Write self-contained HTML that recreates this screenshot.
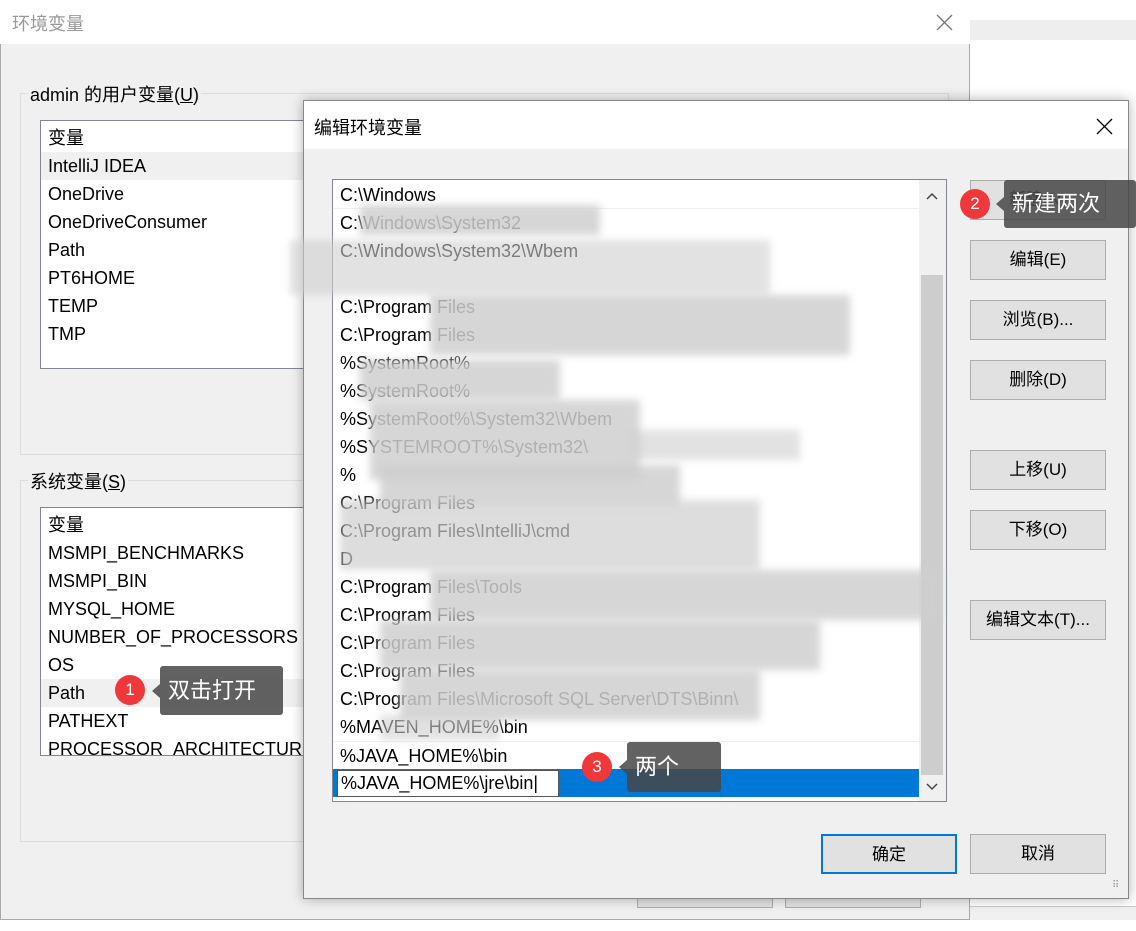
<!DOCTYPE html>
<html><head><meta charset="utf-8"><style>
*{margin:0;padding:0;box-sizing:border-box}
body{width:1136px;height:931px;overflow:hidden;background:#fff;font-family:"Liberation Sans","Noto Sans CJK SC",sans-serif;font-size:18px;color:#000;position:relative}
.a{position:absolute}
.row{position:absolute;left:0;right:0;height:28px;line-height:28px;padding-left:7px;white-space:nowrap}
.btn{position:absolute;left:970px;width:136px;height:40px;background:#e1e1e1;border:1px solid #adadad;text-align:center;line-height:38px;font-size:17px}
.badge{position:absolute;width:30px;height:30px;border-radius:50%;background:#f0383a;color:#fff;text-align:center;line-height:30px;font-size:17px}
.tip{position:absolute;background:rgba(70,70,70,.85);color:#fff;font-size:22px;border-radius:3px;padding-left:8px}
.tip:before{content:"";position:absolute;left:-8px;top:50%;margin-top:-7px;border:7px solid transparent;border-left:0;border-right:8px solid rgba(70,70,70,.85)}
.blur{position:absolute;background:#cfcfcf;filter:blur(4px);opacity:.85}
</style></head><body>
<div class="a" style="left:0;top:0;width:970px;height:920px;background:#f0f0f0;border:1px solid #aaa"></div>
<div class="a" style="left:0;top:0;width:970px;height:44px;background:#fff"></div>
<div class="a" style="left:12px;top:10px;color:#999;font-size:18px">环境变量</div>
<svg class="a" style="left:936px;top:14px" width="17" height="17"><path d="M1 1L16 16M16 1L1 16" stroke="#777" stroke-width="1.3"/></svg>
<div class="a" style="left:970px;top:20px;width:166px;height:20px;background:#eee"></div>
<div class="a" style="left:970px;top:906px;width:166px;height:14px;background:#f0f0f0;border-top:1px solid #ccc"></div>
<div class="a" style="left:20px;top:93px;width:929px;height:362px;border:1px solid #dcdcdc"></div>
<div class="a" style="left:28px;top:81px;background:#f0f0f0;padding:0 2px;font-size:18px">admin 的用户变量(<u>U</u>)</div>
<div class="a" style="left:40px;top:120px;width:280px;height:249px;background:#fff;border:1px solid #828790;overflow:hidden">
 <div class="row" style="top:3px">变量</div>
 <div class="row" style="top:31px;background:#f0f0f0">IntelliJ IDEA</div>
 <div class="row" style="top:59px">OneDrive</div>
 <div class="row" style="top:87px">OneDriveConsumer</div>
 <div class="row" style="top:115px">Path</div>
 <div class="row" style="top:143px">PT6HOME</div>
 <div class="row" style="top:171px">TEMP</div>
 <div class="row" style="top:199px">TMP</div>
</div>
<div class="a" style="left:20px;top:480px;width:929px;height:362px;border:1px solid #dcdcdc"></div>
<div class="a" style="left:28px;top:468px;background:#f0f0f0;padding:0 2px">系统变量(<u>S</u>)</div>
<div class="a" style="left:40px;top:507px;width:280px;height:249px;background:#fff;border:1px solid #828790;overflow:hidden">
 <div class="row" style="top:3px">变量</div>
 <div class="row" style="top:31px">MSMPI_BENCHMARKS</div>
 <div class="row" style="top:59px">MSMPI_BIN</div>
 <div class="row" style="top:87px">MYSQL_HOME</div>
 <div class="row" style="top:115px">NUMBER_OF_PROCESSORS</div>
 <div class="row" style="top:143px">OS</div>
 <div class="row" style="top:171px;background:#f0f0f0">Path</div>
 <div class="row" style="top:199px">PATHEXT</div>
 <div class="row" style="top:227px">PROCESSOR_ARCHITECTURE</div>
</div>
<div class="a" style="left:637px;top:880px;width:136px;height:28px;background:#e1e1e1;border:1px solid #adadad"></div>
<div class="a" style="left:785px;top:880px;width:136px;height:28px;background:#e1e1e1;border:1px solid #adadad"></div>

<div class="a" style="left:303px;top:100px;width:826px;height:799px;background:#f0f0f0;border:1px solid #888;box-shadow:0 0 12px rgba(0,0,0,.3)"></div>
<div class="a" style="left:304px;top:101px;width:824px;height:48px;background:#fff"></div>
<div class="a" style="left:314px;top:114px;font-size:18px">编辑环境变量</div>
<svg class="a" style="left:1096px;top:118px" width="17" height="17"><path d="M1 1L16 16M16 1L1 16" stroke="#000" stroke-width="1.3"/></svg>
<div class="a" style="left:332px;top:179px;width:615px;height:623px;background:#fff;border:1px solid #828790;overflow:hidden">
 <div class="row" style="top:1px;border-bottom:1px solid #eee;right:27px">C:\Windows</div>
 <div class="row" style="top:29px;right:27px">C:\Windows\System32</div>
 <div class="row" style="top:57px;right:27px">C:\Windows\System32\Wbem</div>
 <div class="row" style="top:113px;right:27px">C:\Program Files</div>
 <div class="row" style="top:141px;right:27px">C:\Program Files</div>
 <div class="row" style="top:169px;right:27px">%SystemRoot%</div>
 <div class="row" style="top:197px;right:27px">%SystemRoot%</div>
 <div class="row" style="top:225px;right:27px">%SystemRoot%\System32\Wbem</div>
 <div class="row" style="top:253px;right:27px">%SYSTEMROOT%\System32\</div>
 <div class="row" style="top:281px;right:27px">%</div>
 <div class="row" style="top:309px;right:27px">C:\Program Files</div>
 <div class="row" style="top:337px;right:27px">C:\Program Files\IntelliJ\cmd</div>
 <div class="row" style="top:365px;right:27px">D</div>
 <div class="row" style="top:393px;right:27px">C:\Program Files\Tools</div>
 <div class="row" style="top:421px;right:27px">C:\Program Files</div>
 <div class="row" style="top:449px;right:27px">C:\Program Files</div>
 <div class="row" style="top:477px;right:27px">C:\Program Files</div>
 <div class="row" style="top:505px;right:27px">C:\Program Files\Microsoft SQL Server\DTS\Binn\</div>
 <div class="row" style="top:533px;right:27px">%MAVEN_HOME%\bin</div>
 <div class="row" style="top:561px;right:27px;border-top:1px solid #eee">%JAVA_HOME%\bin</div>
 <div class="row" style="top:589px;right:27px;background:#0078d7"></div>
 <div class="a" style="left:4px;top:590px;width:222px;height:27px;background:#fff;border:1px solid #555;line-height:25px;padding-left:3px;white-space:nowrap">%JAVA_HOME%\jre\bin|</div>
 <div class="a" style="right:0;top:0;width:27px;height:621px;background:#f0f0f0"></div>
 <div class="a" style="right:3px;top:95px;width:22px;height:500px;background:#cdcdcd"></div>
 <svg class="a" style="right:8px;top:12px" width="12" height="8"><path d="M1 7L6 2L11 7" stroke="#444" stroke-width="1.5" fill="none"/></svg>
 <svg class="a" style="right:8px;top:603px" width="12" height="8"><path d="M1 1L6 6L11 1" stroke="#444" stroke-width="1.5" fill="none"/></svg>
</div>
<div class="blur" style="left:360px;top:205px;width:240px;height:30px"></div>
<div class="blur" style="left:290px;top:240px;width:480px;height:55px;opacity:.6"></div>
<div class="blur" style="left:430px;top:295px;width:420px;height:60px"></div>
<div class="blur" style="left:360px;top:360px;width:200px;height:40px"></div>
<div class="blur" style="left:370px;top:400px;width:270px;height:80px"></div>
<div class="blur" style="left:630px;top:430px;width:170px;height:30px;opacity:.6"></div>
<div class="blur" style="left:380px;top:465px;width:300px;height:40px"></div>
<div class="blur" style="left:340px;top:500px;width:420px;height:70px;opacity:.7"></div>
<div class="blur" style="left:430px;top:570px;width:510px;height:50px"></div>
<div class="blur" style="left:380px;top:620px;width:440px;height:50px"></div>
<div class="blur" style="left:400px;top:670px;width:360px;height:50px"></div>
<div class="blur" style="left:380px;top:715px;width:120px;height:25px;opacity:.6"></div>

<div class="btn" style="top:180px">新建(N)</div>
<div class="btn" style="top:240px">编辑(E)</div>
<div class="btn" style="top:300px">浏览(B)...</div>
<div class="btn" style="top:360px">删除(D)</div>
<div class="btn" style="top:450px">上移(U)</div>
<div class="btn" style="top:510px">下移(O)</div>
<div class="btn" style="top:600px">编辑文本(T)...</div>
<div class="btn" style="left:821px;top:834px;border:2px solid #0078d7">确定</div>
<div class="btn" style="top:834px">取消</div>
<div class="a" style="left:1112px;top:880px;font-size:10px;color:#999">⠿</div>

<div class="badge" style="left:115px;top:675px">1</div>
<div class="tip" style="left:160px;top:666px;width:123px;height:49px;line-height:49px">双击打开</div>
<div class="badge" style="left:960px;top:189px">2</div>
<div class="tip" style="left:1004px;top:180px;width:132px;height:48px;line-height:48px">新建两次</div>
<div class="badge" style="left:582px;top:752px">3</div>
<div class="tip" style="left:627px;top:742px;width:94px;height:50px;line-height:50px">两个</div>
</body></html>
